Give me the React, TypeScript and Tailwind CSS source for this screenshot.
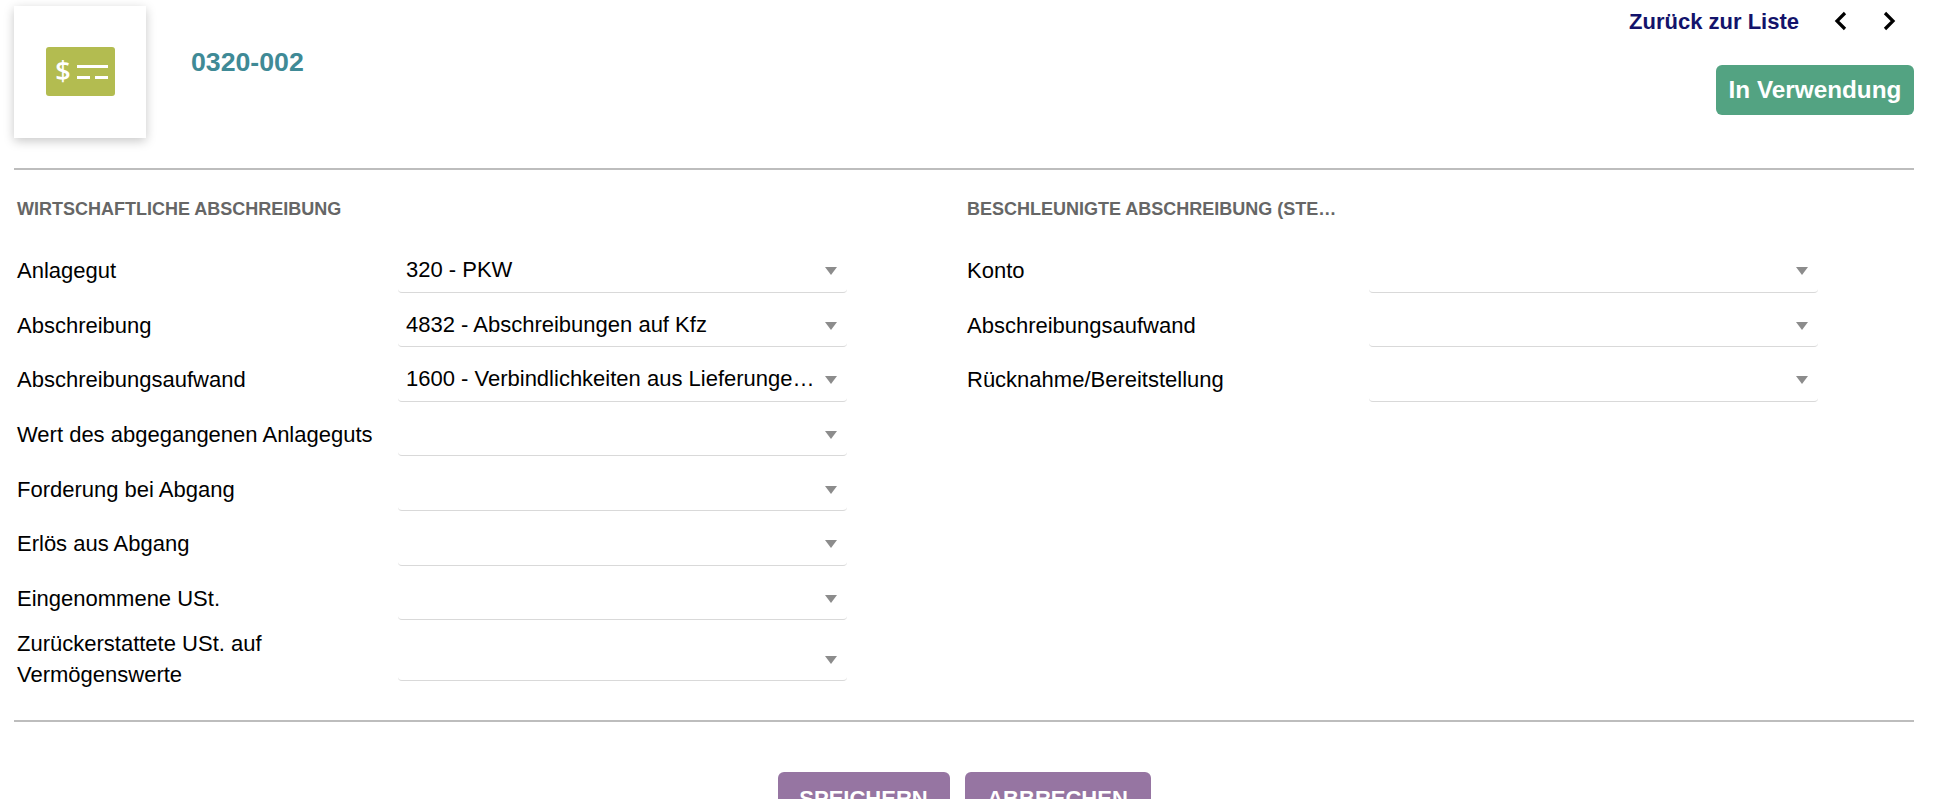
const font = "font-['Liberation_Sans',Arial,sans-serif]";

const leftRows = [
  { label: "Anlagegut", value: "320 - PKW" },
  { label: "Abschreibung", value: "4832 - Abschreibungen auf Kfz" },
  { label: "Abschreibungsaufwand", value: "1600 - Verbindlichkeiten aus Lieferungen und Leistungen" },
  { label: "Wert des abgegangenen Anlageguts", value: "" },
  { label: "Forderung bei Abgang", value: "" },
  { label: "Erlös aus Abgang", value: "" },
  { label: "Eingenommene USt.", value: "" },
];

const rightRows = [
  { label: "Konto", value: "" },
  { label: "Abschreibungsaufwand", value: "" },
  { label: "Rücknahme/Bereitstellung", value: "" },
];

function SelectField({ value, center }: { value: string; center?: boolean }) {
  return (
    <div className={`flex h-full w-[449px] rounded-b-[4px] border-b border-[#d9d9d9] pl-2 pr-[10px] ${center ? "items-center pt-[19px]" : "items-end pb-[9.4px]"}`}>
      <span className="min-w-0 flex-1 truncate text-[22px] leading-[25px] text-black">{value}</span>
      <span className={`ml-2 h-0 w-0 shrink-0 border-x-[6.5px] border-t-[8px] border-x-transparent border-t-[#8c8c8c] ${center ? "" : "mb-[7px]"}`} />
    </div>
  );
}

function Row({ label, value }: { label: string; value: string }) {
  return (
    <div className="flex h-[54.6px] items-stretch">
      <div className="flex w-[384px] items-end whitespace-nowrap pb-[9.4px] pl-[3px] text-[22px] leading-[25px] text-black">{label}</div>
      <SelectField value={value} />
    </div>
  );
}

export default function App() {
  return (
    <div className={`${font} h-screen overflow-hidden bg-white pl-[14px] pr-[34px]`}>
      {/* Kopfbereich */}
      <div className="flex h-[170px] justify-between border-b-2 border-[#bdbdbd] pt-[6px]">
        <div className="flex items-start">
          <div className="flex h-[132px] w-[132px] items-center justify-center bg-white shadow-[0_3px_10px_rgba(0,0,0,0.22)]">
            <svg width="69" height="49" viewBox="0 0 69 49" className="-mt-[2px]">
              <rect width="69" height="49" rx="3" fill="#b3bc50" />
              <path d="M31 18h31v3H31zM31 29h13v3H31zM49 29h13v3H49z" fill="#fff" />
              <text x="17" y="34" textAnchor="middle" fill="#fff" fontSize="27" fontWeight="600" fontFamily="Open Sans, sans-serif">$</text>
            </svg>
          </div>
          <div className="ml-[45px] mt-[40px] text-[26.7px] font-bold leading-[32px] text-[#3f8a96]">0320-002</div>
        </div>
        <div className="flex flex-col items-end">
          <div className="flex h-[30px] items-center pr-[16px]">
            <span className="text-[22px] font-bold text-[#13136b]">Zurück zur Liste</span>
            <svg width="16" height="22" viewBox="0 0 16 22" className="ml-[33px]" fill="none" stroke="#000" strokeWidth="3.2">
              <path d="M13 3 5 11l8 8" />
            </svg>
            <svg width="16" height="22" viewBox="0 0 16 22" className="ml-[34px]" fill="none" stroke="#000" strokeWidth="3.2">
              <path d="M3 3l8 8-8 8" />
            </svg>
          </div>
          <div className="mt-[29px] flex h-[50px] w-[198px] items-center justify-center rounded-[6px] bg-[#53a382] text-[24.3px] font-bold text-white">
            In Verwendung
          </div>
        </div>
      </div>

      {/* Formular */}
      <div className="flex h-[552px] border-b-2 border-[#bdbdbd]">
        <div className="w-[953px]">
          <h3 className="mb-[24px] mt-[29px] pl-[3px] text-[18px] font-bold leading-[20px] text-[#666666]">WIRTSCHAFTLICHE ABSCHREIBUNG</h3>
          <div className="-mt-[5px]">
            {leftRows.map((r) => (
              <Row key={r.label} label={r.label} value={r.value} />
            ))}
            <div className="flex h-[61px] items-stretch">
              <div className="w-[384px] pl-[3px] pr-8 pt-[8px] text-[22px] leading-[31px] text-black">
                Zurückerstattete USt. auf Vermögenswerte
              </div>
              <SelectField value="" center />
            </div>
          </div>
        </div>
        <div className="flex-1">
          <h3 className="mb-[24px] mt-[29px] w-[372px] truncate text-[18px] font-bold leading-[20px] text-[#666666]">BESCHLEUNIGTE ABSCHREIBUNG (STEUERLICH)</h3>
          <div className="-mt-[5px]">
            {rightRows.map((r) => (
              <div key={r.label} className="flex h-[54.6px] items-stretch">
                <div className="flex w-[402px] items-end pb-[9.4px] text-[22px] leading-[25px] text-black">{r.label}</div>
                <SelectField value={r.value} />
              </div>
            ))}
          </div>
        </div>
      </div>

      {/* Aktionen */}
      <div className="flex justify-center gap-[15px] pt-[50px]">
        <button className="h-[50px] w-[172px] rounded-[6px] bg-[#9675a2] pt-[2px] text-[22px] font-bold text-white">SPEICHERN</button>
        <button className="h-[50px] w-[186px] rounded-[6px] bg-[#9675a2] pt-[2px] text-[22px] font-bold text-white">ABBRECHEN</button>
      </div>
    </div>
  );
}
